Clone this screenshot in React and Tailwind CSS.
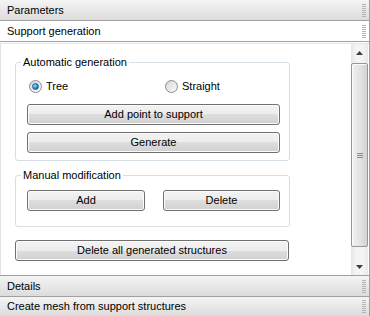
import React from "react";

function Grip() {
  return (
    <div className="flex flex-col gap-[1px] mr-[3px]">
      {[0, 1, 2, 3, 4, 5, 6].map((i) => (
        <div key={i} className="w-[4px] h-[1px] bg-[#b4b4b4]" />
      ))}
    </div>
  );
}

function SectionHeader({ title, active, className = "" }) {
  return (
    <div
      className={`flex items-center justify-between pl-[7px] border-[#a0a0a0] ${
        active
          ? "bg-white"
          : "bg-[linear-gradient(#f4f4f4,#e9e9e9_45%,#dcdcdc)]"
      } ${className}`}
    >
      <span className="leading-[13px]">{title}</span>
      <Grip />
    </div>
  );
}

function Button({ children, className = "" }) {
  return (
    <button
      className={`h-[21px] rounded-[3px] border border-[#707070] bg-[linear-gradient(#f3f3f3_0%,#ececec_50%,#dedede_50%,#d0d0d0_100%)] shadow-[inset_0_0_0_1px_#fbfbfb] text-[11px] leading-[13px] text-black ${className}`}
    >
      {children}
    </button>
  );
}

function Radio({ checked, label }) {
  return (
    <label className="flex items-center gap-[4px]">
      <span className="w-[13px] h-[13px] rounded-full border border-[#8b8b8b] bg-[linear-gradient(135deg,#d6d6d6,#fbfbfb)] flex items-center justify-center">
        {checked && (
          <span className="w-[7px] h-[7px] rounded-full bg-[radial-gradient(circle_at_35%_35%,#9fe0ff,#1f8fd4_55%,#0a4f86)] border border-[#1b5f93]" />
        )}
      </span>
      <span className="leading-[13px]">{label}</span>
    </label>
  );
}

function GroupBox({ title, children, className = "" }) {
  return (
    <fieldset
      className={`w-[275px] border border-[#d5dfe5] rounded-[3px] pl-[11px] pr-[9px] ${className}`}
    >
      <legend className="ml-[-6px] px-[2px] leading-[13px]">{title}</legend>
      {children}
    </fieldset>
  );
}

function Arrow({ up }) {
  return (
    <svg width="7" height="4" viewBox="0 0 7 4">
      <path d={up ? "M0 4 L3.5 0 L7 4 Z" : "M0 0 L7 0 L3.5 4 Z"} fill="#3c3c3c" />
    </svg>
  );
}

function ScrollBar() {
  return (
    <div className="w-[17px] mr-[1px] flex flex-col bg-[linear-gradient(90deg,#e6e6e6,#f4f4f4_30%,#f4f4f4_70%,#e8e8e8)]">
      <div className="h-[17px] flex items-center justify-center pt-[1px]">
        <Arrow up />
      </div>
      <div className="h-[2px]" />
      <div className="h-[184px] rounded-[2px] border border-[#979797] bg-[linear-gradient(90deg,#f1f1f1,#e4e4e4_50%,#d2d2d2)] shadow-[inset_1px_1px_0_#fbfbfb] flex items-center justify-center">
        <div className="flex flex-col gap-[1px]">
          <div className="w-[6px] h-[1px] bg-[#8a8a8a]" />
          <div className="w-[6px] h-[1px] bg-[#8a8a8a]" />
          <div className="w-[6px] h-[1px] bg-[#8a8a8a]" />
        </div>
      </div>
      <div className="flex-1 flex items-end justify-center pb-[6px]">
        <Arrow />
      </div>
    </div>
  );
}

export default function App() {
  return (
    <div className="w-[370px] h-[316px] bg-white font-['Liberation_Sans',Arial,sans-serif] text-[11px] text-black flex flex-col border-r border-[#a0a0a0] overflow-hidden">
      {/* HEADERS */}
      <SectionHeader title="Parameters" className="h-[21px] border-b" />
      <SectionHeader title="Support generation" active className="h-[21px] border-b" />

      {/* CONTENT */}
      <div className="flex-1 pt-[1px] flex flex-col">
        <div className="flex-1 flex border-t border-l border-[#e2e2e2]">
          <div className="flex-1 pl-[14px] pt-[12px]">
            {/* AUTOMATIC */}
            <GroupBox title="Automatic generation" className="pb-[7px]">
              <div className="flex items-center h-[16px] mt-[9px] pl-[2px]">
                <div className="w-[136px]">
                  <Radio checked label="Tree" />
                </div>
                <Radio label="Straight" />
              </div>
              <Button className="w-[253px] mt-[10px] block">Add point to support</Button>
              <Button className="w-[253px] mt-[7px] block">Generate</Button>
            </GroupBox>

            {/* MANUAL */}
            <GroupBox title="Manual modification" className="mt-[8px] pb-[15px]">
              <div className="flex justify-between mt-[8px]">
                <Button className="w-[118px]">Add</Button>
                <Button className="w-[117px]">Delete</Button>
              </div>
            </GroupBox>

            <Button className="w-[274px] mt-[13px] block">Delete all generated structures</Button>
          </div>

          <ScrollBar />
        </div>
      </div>

      {/* FOOTER HEADERS */}
      <SectionHeader title="Details" className="h-[21px] border-t" />
      <SectionHeader title="Create mesh from support structures" className="h-[20px] border-t" />
    </div>
  );
}
